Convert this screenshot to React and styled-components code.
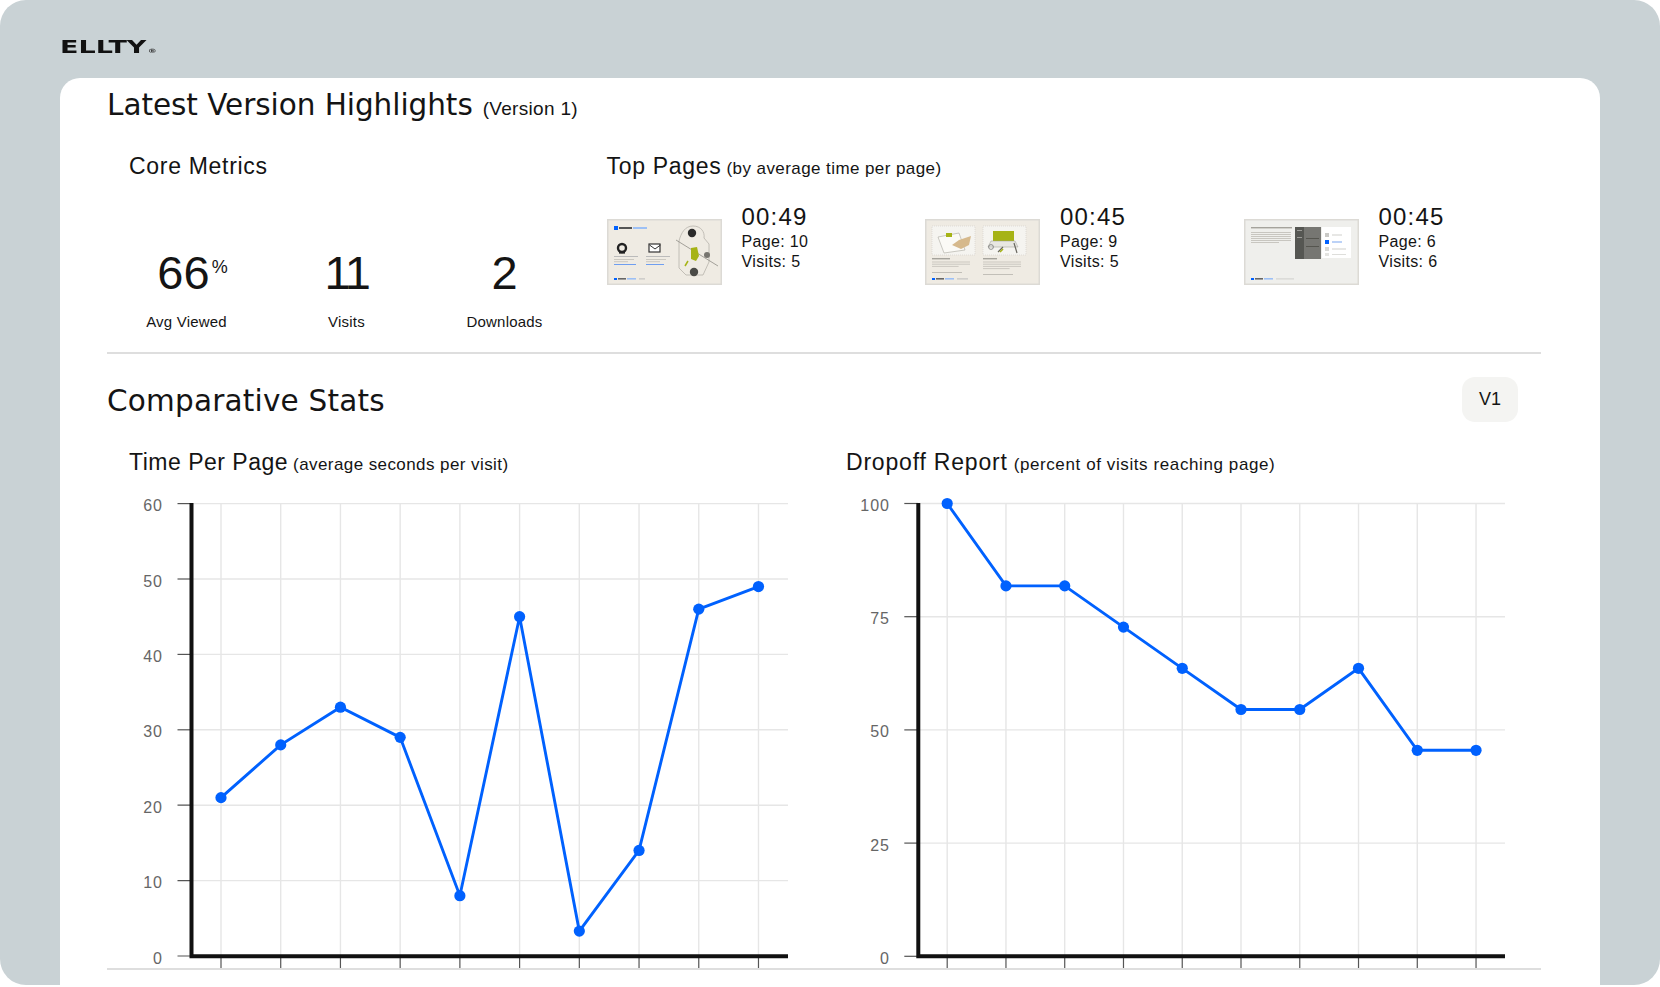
import React from "react";
import styled, { createGlobalStyle } from "styled-components";

const Global = createGlobalStyle`
  html, body { margin: 0; padding: 0; background: #fff; }
  body { font-family: "Liberation Sans", Arial, sans-serif; color: #141414; }
  * { box-sizing: border-box; }
`;

const BLUE = "#0061fe";

const Shell = styled.div`
  width: 1660px;
  height: 985px;
  background: #c9d2d5;
  border-radius: 26px;
  overflow: hidden;
  display: flex;
  flex-direction: column;
  padding-left: 60px;
`;
const TopBar = styled.header`
  height: 78px;
  flex: none;
  padding-top: 34px;
`;
const Logo = styled.div`
  display: inline-block;
  font-family: "DejaVu Sans", sans-serif;
  font-weight: 700;
  font-size: 18px;
  line-height: 25px;
  color: #111;
  transform: scaleX(1.5);
  transform-origin: left center;
  sup {
    font-size: 6px;
    font-weight: 700;
    vertical-align: baseline;
    margin-left: 1px;
    color: #333;
  }
`;
const Card = styled.main`
  flex: 1;
  width: 1540px;
  min-height: 0;
  background: #fff;
  border-radius: 20px 20px 0 0;
  padding: 0 59px 0 47px;
  overflow: hidden;
`;
const Headline = styled.h1`
  margin: 0;
  height: 45px;
  padding-top: 10px;
  font-family: "DejaVu Sans", sans-serif;
  font-weight: 400;
  font-size: 29.5px;
  line-height: 34px;
  white-space: nowrap;
  display: flex;
  align-items: baseline;
  letter-spacing: -0.05px;
`;
const HeadNote = styled.span`
  font-family: "Liberation Sans", sans-serif;
  font-size: 19px;
  letter-spacing: 0.3px;
  margin-left: 10px;
`;
const Highlights = styled.section`
  display: flex;
  height: 231px;
  border-bottom: 2px solid #dedede;
`;
const CoreCol = styled.div`
  width: 499.5px;
  flex: none;
`;
const SectionTitle = styled.h2`
  margin: 0;
  padding-top: 29px;
  padding-left: ${(p) => p.$indent || 0}px;
  font-weight: 400;
  font-size: 23px;
  line-height: 28px;
  letter-spacing: 0.7px;
  white-space: nowrap;
`;
const TitleNote = styled.span`
  font-size: 17px;
  letter-spacing: ${(p) => p.$spacing || 0.42}px;
  margin-left: ${(p) => p.$gap || 5}px;
`;
const MetricRow = styled.div`
  display: grid;
  grid-template-columns: 159px 161px 155px;
  margin-top: 65px;
`;
const Metric = styled.div`
  display: flex;
  flex-direction: column;
  align-items: center;
`;
const MetricValue = styled.div`
  height: 55px;
  font-size: 47px;
  line-height: 55px;
  white-space: nowrap;
  position: relative;
  padding-right: ${(p) => p.$nudge || 0}px;
  letter-spacing: ${(p) => p.$tight || 0}px;
`;
const Percent = styled.span`
  position: absolute;
  left: 100%;
  top: 12px;
  margin-left: -4px;
  font-size: 18px;
  line-height: 20px;
  letter-spacing: 0;
`;
const MetricLabel = styled.div`
  margin-top: 13px;
  font-size: 15px;
  line-height: 18px;
  letter-spacing: 0.2px;
`;
const PagesCol = styled.div`
  flex: 1;
`;
const PageGrid = styled.div`
  display: grid;
  grid-template-columns: repeat(3, 318.5px);
  margin-top: 19px;
`;
const PageItem = styled.div`
  display: flex;
  gap: 20px;
`;
const Thumb = styled.svg`
  width: 115px;
  height: 66px;
  margin-top: 17px;
  flex: none;
  display: block;
  filter: blur(0.3px);
`;
const PageTime = styled.div`
  font-size: 24px;
  line-height: 30px;
  letter-spacing: 1.2px;
`;
const PageLine = styled.div`
  font-size: 16px;
  line-height: 20px;
  letter-spacing: 0.35px;
`;
const StatsHead = styled.div`
  display: flex;
  justify-content: space-between;
  align-items: center;
  height: 45px;
  margin-top: 23px;
  padding-right: 23px;
`;
const StatsTitle = styled.h1`
  margin: 0;
  padding-top: 3px;
  font-family: "DejaVu Sans", sans-serif;
  font-weight: 400;
  font-size: 29.5px;
  line-height: 34px;
  letter-spacing: 0.2px;
`;
const VersionButton = styled.button`
  width: 56px;
  height: 45px;
  border: 0;
  border-radius: 13px;
  background: #f4f4f2;
  color: #141414;
  font-family: "Liberation Sans", sans-serif;
  font-size: 18px;
  padding: 0;
`;
const Charts = styled.section`
  display: grid;
  grid-template-columns: 717px 717px;
`;
const ChartTitle = styled.h2`
  margin: 0;
  height: 72.5px;
  padding-top: 26px;
  padding-left: 22px;
  font-weight: 400;
  font-size: 23px;
  line-height: 28px;
  letter-spacing: ${(p) => p.$spacing || 0.5}px;
  white-space: nowrap;
`;
const ChartSvg = styled.svg`
  display: block;
  width: 700px;
  height: 473px;
`;
const AxisText = styled.text`
  font-family: "Liberation Sans", sans-serif;
  font-size: 16px;
  letter-spacing: 1px;
  fill: #666;
  text-anchor: end;
`;
const BottomRule = styled.div`
  border-top: 2px solid #dedede;
`;

function Chart({ left, axisX, endX, gridX, rows, points, labelX }) {
  const top = 495;
  const bottom = 956.3;
  const tr = (x) => x - left;
  const ty = (y) => y - top;
  const line = points.map(([x, y]) => `${tr(x)},${ty(y)}`).join(" ");
  return (
    <ChartSvg viewBox="0 0 700 473">
      {rows.map((r) => (
        <line key={r.label} x1={tr(axisX)} x2={tr(endX)} y1={ty(r.y)} y2={ty(r.y)} stroke="#e6e6e6" strokeWidth="1.4" />
      ))}
      {gridX.map((x) => (
        <line key={x} x1={tr(x)} x2={tr(x)} y1={ty(503)} y2={ty(bottom)} stroke="#e6e6e6" strokeWidth="1.4" />
      ))}
      {gridX.map((x) => (
        <line key={x} x1={tr(x)} x2={tr(x)} y1={ty(bottom)} y2={ty(968)} stroke="#555" strokeWidth="1.2" />
      ))}
      {rows.map((r) => (
        <line key={r.label} x1={tr(axisX - 14)} x2={tr(axisX)} y1={ty(r.y)} y2={ty(r.y)} stroke="#555" strokeWidth="1.2" />
      ))}
      {rows.map((r) => (
        <AxisText key={r.label} x={tr(labelX)} y={ty(r.y) + 7.5}>{r.label}</AxisText>
      ))}
      <path d={`M${tr(axisX)} ${ty(503)}V${ty(bottom)}H${tr(endX)}`} fill="none" stroke="#111" strokeWidth="4" />
      <polyline points={line} fill="none" stroke={BLUE} strokeWidth="2.9" />
      {points.map(([x, y]) => (
        <circle key={x} cx={tr(x)} cy={ty(y)} r="5.6" fill={BLUE} />
      ))}
    </ChartSvg>
  );
}

const TextLines = ({ x, y, w, n, gap = 2.2, c = "#cbc8c0" }) => (
  <>
    {Array.from({ length: n }).map((_, i) => (
      <rect key={i} x={x} y={y + i * gap} width={i === n - 1 ? w * 0.7 : w} height="1" fill={c} />
    ))}
  </>
);

const ThumbOne = () => (
  <Thumb viewBox="0 0 115 66">
    <rect x="0.75" y="0.75" width="113.5" height="64.5" fill="#efebe3" stroke="#dcdad5" strokeWidth="1.5" />
    <rect x="7" y="7" width="4" height="4" fill={BLUE} />
    <rect x="12" y="8" width="13" height="2" fill="#555" />
    <rect x="26" y="8" width="14" height="2" fill="#9dc0f5" />
    <circle cx="15" cy="29" r="4" fill="none" stroke="#222" strokeWidth="2.4" />
    <rect x="12" y="33" width="6" height="1.6" fill="#222" />
    <rect x="42" y="25" width="11" height="8" fill="#fff" stroke="#333" strokeWidth="1.2" />
    <path d="M42.5 26l5.5 4 5.5-4" fill="none" stroke="#333" strokeWidth="1" />
    <rect x="7" y="37" width="24" height="1" fill="#bbb" />
    <rect x="39" y="37" width="24" height="1" fill="#bbb" />
    <TextLines x={7} y={40} w={20} n={2} />
    <rect x="7" y="45" width="22" height="1" fill="#6f9ef0" />
    <TextLines x={39} y={40} w={20} n={2} />
    <rect x="39" y="45" width="18" height="1" fill="#6f9ef0" />
    <circle cx="85" cy="14" r="4.2" fill="#2b2b2b" />
    <path d="M72 22c2-8 6-15 14-15s12 6 11 12l5 6v18l-6 13H79l-7-7z" fill="none" stroke="#b6b3ab" strokeWidth="0.8" />
    <path d="M69 21l42 26" stroke="#8f8d87" strokeWidth="0.8" />
    <path d="M84 29l6-1 2 9-3 5-5-2z" fill="#a6b316" />
    <circle cx="87" cy="53" r="4.2" fill="#4a4a46" />
    <circle cx="100" cy="36" r="3" fill="#77756f" />
    <path d="M81 42l-3 5" stroke="#a6b316" strokeWidth="1.5" />
    <rect x="7" y="59" width="3" height="2" fill={BLUE} />
    <rect x="11" y="59" width="8" height="1.6" fill="#666" />
    <rect x="20" y="59" width="9" height="1.6" fill="#9dc0f5" />
    <rect x="32" y="59.4" width="6" height="1" fill="#bbb" />
  </Thumb>
);
const ThumbTwo = () => (
  <Thumb viewBox="0 0 115 66">
    <rect x="0.75" y="0.75" width="113.5" height="64.5" fill="#efebe3" stroke="#dcdad5" strokeWidth="1.5" />
    <rect x="7" y="7" width="43" height="29" fill="#f5f4f0" stroke="#c9c7c0" strokeWidth="0.5" strokeDasharray="1 1" />
    <rect x="58" y="7" width="43" height="29" fill="#f5f4f0" stroke="#c9c7c0" strokeWidth="0.5" strokeDasharray="1 1" />
    <path d="M13 18l21-4 6 17-21 3z" fill="#fbfaf6" stroke="#a9a7a0" strokeWidth="0.6" />
    <rect x="21" y="14" width="6" height="4" fill="#a6b316" />
    <path d="M27 26l7-5 12-4-2 9-8 4z" fill="#d6b98c" />
    <rect x="68" y="12" width="21" height="10" fill="#a6b316" />
    <path d="M66 22h24l3 6H63z" fill="#e8e7e2" stroke="#9a9892" strokeWidth="0.5" />
    <circle cx="66" cy="28" r="2.4" fill="none" stroke="#777" strokeWidth="0.8" />
    <path d="M73 33l5-5M89 24l3 10" stroke="#6a6860" strokeWidth="1.2" />
    <path d="M75 33l3-3" stroke="#a6b316" strokeWidth="1.6" />
    <rect x="7" y="39" width="18" height="1.4" fill="#a5a39c" />
    <rect x="58" y="39" width="14" height="1.4" fill="#a5a39c" />
    <TextLines x={7} y={42.5} w={38} n={3} />
    <TextLines x={58} y={42.5} w={38} n={4} />
    <rect x="7" y="53" width="30" height="1" fill="#c2bfb8" />
    <rect x="58" y="55" width="30" height="1" fill="#c2bfb8" />
    <rect x="7" y="59" width="3" height="2" fill={BLUE} />
    <rect x="11" y="59" width="8" height="1.6" fill="#666" />
    <rect x="20" y="59" width="9" height="1.6" fill="#9dc0f5" />
    <rect x="32" y="59.4" width="11" height="1" fill="#bbb" />
  </Thumb>
);
const ThumbThree = () => (
  <Thumb viewBox="0 0 115 66">
    <rect x="0.75" y="0.75" width="113.5" height="64.5" fill="#efefec" stroke="#dcdad5" strokeWidth="1.5" />
    <rect x="7" y="8" width="41" height="1.4" fill="#a5a39c" />
    <TextLines x={7} y={13} w={40} n={6} gap={2} c="#c8c6c0" />
    <rect x="51" y="8" width="9" height="32" fill="#555652" />
    <rect x="60" y="8" width="17" height="32" fill="#767672" />
    <rect x="53" y="11" width="5" height="1" fill="#9a9a96" />
    <rect x="53" y="18" width="5" height="1" fill="#9a9a96" />
    <rect x="62" y="19" width="13" height="1" fill="#55554f" />
    <rect x="62" y="27" width="13" height="1" fill="#55554f" />
    <rect x="78" y="8" width="29" height="31" fill="#fff" />
    <rect x="81" y="14" width="4" height="4" fill="#c9c9c6" />
    <rect x="81" y="21" width="4" height="4" fill={BLUE} />
    <rect x="81" y="28" width="4" height="4" fill="#d8d8d5" />
    <rect x="81" y="34" width="4" height="3" fill="#e4e4e1" />
    <rect x="88" y="15.5" width="10" height="1" fill="#cfcfcc" />
    <rect x="88" y="22.5" width="10" height="1" fill="#7aa6f0" />
    <rect x="88" y="29.5" width="14" height="1" fill="#cfcfcc" />
    <rect x="88" y="35" width="14" height="1" fill="#dededb" />
    <rect x="7" y="59" width="3" height="2" fill={BLUE} />
    <rect x="11" y="59" width="8" height="1.6" fill="#666" />
    <rect x="20" y="59" width="9" height="1.6" fill="#9dc0f5" />
    <rect x="32" y="59.4" width="18" height="1" fill="#cfcfcc" />
  </Thumb>
);

const pages = [
  { time: "00:49", page: 10, visits: 5, Art: ThumbOne },
  { time: "00:45", page: 9, visits: 5, Art: ThumbTwo },
  { time: "00:45", page: 6, visits: 6, Art: ThumbThree },
];

const timeX = Array.from({ length: 10 }, (_, i) => 221 + i * 59.72);
const timeVals = [21, 28, 33, 29, 8, 45, 3.3, 14, 46, 49];
const timeRows = [60, 50, 40, 30, 20, 10, 0].map((v) => ({ label: String(v), y: 956 - v * 7.54 }));
const dropX = Array.from({ length: 10 }, (_, i) => 947.2 + i * 58.76);
const dropVals = [100, 81.8, 81.8, 72.7, 63.6, 54.5, 54.5, 63.6, 45.5, 45.5];
const dropRows = [100, 75, 50, 25, 0].map((v) => ({ label: String(v), y: 956.3 - v * 4.528 }));

export default function App() {
  return (
    <>
      <Global />
      <Shell>
        <TopBar>
          <Logo>ELLTY<sup>®</sup></Logo>
        </TopBar>
        <Card>
          <Headline>
            Latest Version Highlights<HeadNote>(Version 1)</HeadNote>
          </Headline>
          <Highlights>
            <CoreCol>
              <SectionTitle $indent={22}>Core Metrics</SectionTitle>
              <MetricRow>
                <Metric>
                  <MetricValue $nudge={6}>66<Percent>%</Percent></MetricValue>
                  <MetricLabel>Avg Viewed</MetricLabel>
                </Metric>
                <Metric>
                  <MetricValue $tight={-2.5}>11</MetricValue>
                  <MetricLabel>Visits</MetricLabel>
                </Metric>
                <Metric>
                  <MetricValue>2</MetricValue>
                  <MetricLabel>Downloads</MetricLabel>
                </Metric>
              </MetricRow>
            </CoreCol>
            <PagesCol>
              <SectionTitle>Top Pages<TitleNote>(by average time per page)</TitleNote></SectionTitle>
              <PageGrid>
                {pages.map(({ time, page, visits, Art }) => (
                  <PageItem key={page}>
                    <Art />
                    <div>
                      <PageTime>{time}</PageTime>
                      <PageLine>Page: {page}</PageLine>
                      <PageLine>Visits: {visits}</PageLine>
                    </div>
                  </PageItem>
                ))}
              </PageGrid>
            </PagesCol>
          </Highlights>
          <StatsHead>
            <StatsTitle>Comparative Stats</StatsTitle>
            <VersionButton>V1</VersionButton>
          </StatsHead>
          <Charts>
            <div>
              <ChartTitle>Time Per Page<TitleNote>(average seconds per visit)</TitleNote></ChartTitle>
              <Chart
                left={107}
                axisX={191.5}
                endX={788}
                labelX={163}
                gridX={timeX}
                rows={timeRows}
                points={timeX.map((x, i) => [x, 956 - timeVals[i] * 7.54])}
              />
            </div>
            <div>
              <ChartTitle $spacing={0.8}>Dropoff Report<TitleNote $gap={6} $spacing={0.6}>(percent of visits reaching page)</TitleNote></ChartTitle>
              <Chart
                left={824}
                axisX={918.3}
                endX={1505}
                labelX={890}
                gridX={dropX}
                rows={dropRows}
                points={dropX.map((x, i) => [x, 956.3 - dropVals[i] * 4.528])}
              />
            </div>
          </Charts>
          <BottomRule />
        </Card>
      </Shell>
    </>
  );
}
